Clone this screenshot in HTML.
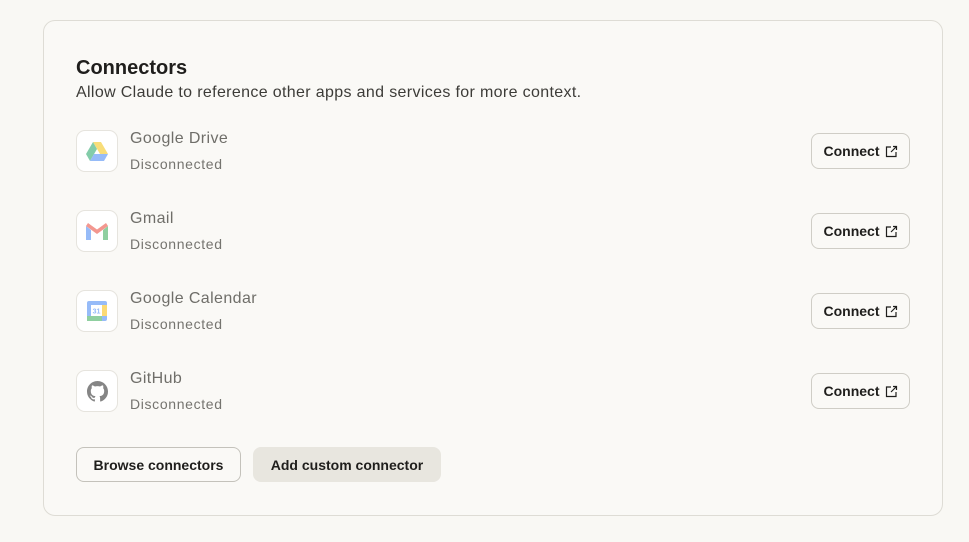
<!DOCTYPE html>
<html><head><style>
body{margin:0;width:969px;height:542px;background:#f9f8f4;font-family:"Liberation Sans",sans-serif;position:relative;overflow:hidden}
.card{position:absolute;left:43px;top:20px;width:898px;height:494px;border:1px solid #dedcd5;border-radius:12px;background:#faf9f6}
.t{position:absolute;left:76px;top:57px;font-size:20px;font-weight:bold;color:#1f1e1c}
.s{position:absolute;left:76px;top:84px;font-size:16px;color:#3d3c38;letter-spacing:.35px}
.row{position:absolute;left:76px;width:834px;height:42px}
.ic{position:absolute;left:0;top:0;width:40px;height:40px;border:1px solid #e6e4de;border-radius:9px;background:#fff;display:flex;align-items:center;justify-content:center}
.ic svg{opacity:.55}
.n{position:absolute;left:54px;top:0px;font-size:16px;color:#6f6e69;letter-spacing:.4px}
.d{position:absolute;left:54px;top:26px;font-size:14px;color:#75746f;letter-spacing:.65px}
.c{position:absolute;left:735px;top:3px;width:99px;height:36px;border:1px solid #cfcdc6;border-radius:8px;box-sizing:border-box;font-size:14px;font-weight:bold;color:#1f1e1c;display:flex;align-items:center;justify-content:center;gap:5px;background:#faf9f6}
.b{position:absolute;top:447px;height:35px;border-radius:8px;box-sizing:border-box;font-size:14px;font-weight:bold;color:#1f1e1c;display:flex;align-items:center;justify-content:center}
</style></head><body>
<div class="card"></div>
<div class="t">Connectors</div>
<div class="s">Allow Claude to reference other apps and services for more context.</div>

<div class="row" style="top:130px"><div class="ic"><svg width="22" height="20" viewBox="0 0 22 20"><path d="M7 1h8l7 12h-8z" fill="#f4c20d"/><path d="M7 1l4 7-7 12-4-7z" fill="#1fa463"/><path d="M4 20h14l4-7H8z" fill="#4285f4"/></svg></div><div class="n">Google Drive</div><div class="d">Disconnected</div><div class="c">Connect <svg width="13" height="13" viewBox="0 0 13 13" fill="none" stroke="#1f1e1c" stroke-width="1.2"><path d="M6 2H1.5v9.5H11V7M8 1.5h3.5V5M11.5 1.5L6 7"/></svg></div></div>

<div class="row" style="top:210px"><div class="ic"><svg width="22" height="17" viewBox="0 0 22 17"><path d="M0 3v14h5V7z" fill="#4285f4"/><path d="M22 3v14h-5V7z" fill="#34a853"/><path d="M0 3l11 8 11-8-2-3-9 6.5L2 0z" fill="#ea4335"/></svg></div><div class="n">Gmail</div><div class="d">Disconnected</div><div class="c">Connect <svg width="13" height="13" viewBox="0 0 13 13" fill="none" stroke="#1f1e1c" stroke-width="1.2"><path d="M6 2H1.5v9.5H11V7M8 1.5h3.5V5M11.5 1.5L6 7"/></svg></div></div>

<div class="row" style="top:290px"><div class="ic"><svg width="20" height="20" viewBox="0 0 20 20"><rect width="20" height="20" rx="2" fill="#4285f4"/><rect x="15" y="4" width="5" height="11" fill="#fbbc04"/><rect x="0" y="15" width="15" height="5" fill="#34a853"/><rect x="4" y="4" width="11" height="11" fill="#fff"/><text x="9.5" y="12.5" font-size="7" font-family="Liberation Sans" text-anchor="middle" fill="#4285f4" font-weight="bold">31</text></svg></div><div class="n">Google Calendar</div><div class="d">Disconnected</div><div class="c">Connect <svg width="13" height="13" viewBox="0 0 13 13" fill="none" stroke="#1f1e1c" stroke-width="1.2"><path d="M6 2H1.5v9.5H11V7M8 1.5h3.5V5M11.5 1.5L6 7"/></svg></div></div>

<div class="row" style="top:370px"><div class="ic"><svg width="21" height="21" viewBox="0 0 16 16"><path fill="#222" d="M8 0C3.58 0 0 3.58 0 8c0 3.54 2.29 6.53 5.47 7.59.4.07.55-.17.55-.38v-1.33c-2.23.49-2.7-1.07-2.7-1.07-.36-.92-.89-1.17-.89-1.17-.73-.5.05-.49.05-.49.8.06 1.23.83 1.23.83.72 1.22 1.87.87 2.33.66.07-.52.28-.87.5-1.07-1.78-.2-3.64-.89-3.64-3.95 0-.87.31-1.59.82-2.150-.08-.2-.36-1.02.08-2.12 0 0 .67-.21 2.2.82a7.6 7.6 0 0 1 4 0c1.53-1.04 2.2-.82 2.2-.82.44 1.1.16 1.92.08 2.12.51.56.82 1.27.82 2.15 0 3.07-1.87 3.75-3.65 3.95.29.25.54.73.54 1.48v2.2c0 .21.15.46.55.38A8 8 0 0 0 16 8c0-4.42-3.58-8-8-8z"/></svg></div><div class="n">GitHub</div><div class="d">Disconnected</div><div class="c">Connect <svg width="13" height="13" viewBox="0 0 13 13" fill="none" stroke="#1f1e1c" stroke-width="1.2"><path d="M6 2H1.5v9.5H11V7M8 1.5h3.5V5M11.5 1.5L6 7"/></svg></div></div>

<div class="b" style="left:76px;width:165px;border:1px solid #c4c2bb;background:#faf9f6">Browse connectors</div>
<div class="b" style="left:253px;width:188px;background:#e8e6df">Add custom connector</div>
</body></html>
